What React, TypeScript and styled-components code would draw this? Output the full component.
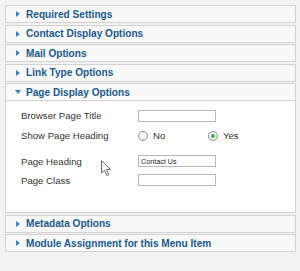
import React from "react";
import styled, { createGlobalStyle } from "styled-components";

const GlobalStyle = createGlobalStyle`
  html, body { margin: 0; padding: 0; }
  body {
    background: #f2f2f2;
    font-family: "Liberation Sans", Arial, sans-serif;
  }
  * { box-sizing: border-box; }
`;

const Page = styled.div`
  width: 300px;
  height: 271px;
  padding: 5px 4px 0 5px;
  position: relative;
  overflow: hidden;
`;

const Panel = styled.div`
  border: 1px solid #d2d2d2;
  background: #f8f8f8;
  margin-bottom: 1.5px;
`;

const Toggler = styled.div`
  height: 16px;
  display: flex;
  align-items: center;
  padding-left: 9px;
  gap: 5px;
  font-weight: bold;
  font-size: 10.1px;
  color: #1b5a8a;
  white-space: nowrap;
  overflow: hidden;
`;

const ArrowBox = styled.span`
  width: 6px;
  height: 6px;
  display: flex;
  align-items: center;
  justify-content: center;
  flex: none;
`;

const Content = styled.div`
  background: #ffffff;
  border-top: 1px solid #d2d2d2;
  height: 112px;
  padding: 0 0 0 15px;
  display: flex;
  flex-direction: column;
`;

const Row = styled.div<{ $top: number }>`
  display: grid;
  grid-template-columns: 117px 1fr;
  align-items: center;
  height: 14px;
  margin-top: ${(p) => p.$top}px;
`;

const Label = styled.span`
  font-size: 9.6px;
  color: #333;
  white-space: nowrap;
`;

const TextInput = styled.div`
  width: 78px;
  height: 12px;
  border: 1px solid #b8b8b8;
  background: #fff;
  font-size: 7.2px;
  color: #222;
  display: flex;
  align-items: center;
  padding-left: 2px;
  white-space: nowrap;
`;

const RadioGroup = styled.div`
  display: flex;
  align-items: center;
`;

const RadioOption = styled.div`
  width: 70px;
  display: flex;
  align-items: center;
  gap: 5px;
  font-size: 9.6px;
  color: #333;
`;

const RadioCircle = styled.span<{ $checked?: boolean }>`
  width: 10px;
  height: 10px;
  border-radius: 50%;
  border: 1px solid #8c8c8c;
  background: radial-gradient(circle at 40% 35%, #ffffff 0%, #e8e8e8 100%);
  display: flex;
  align-items: center;
  justify-content: center;
  flex: none;
  &::after {
    content: "";
    width: 4px;
    height: 4px;
    border-radius: 50%;
    background: ${(p) => (p.$checked ? "#3fae3f" : "transparent")};
  }
`;

const Cursor = styled.svg`
  position: absolute;
  left: 101px;
  top: 160px;
`;

const Arrow = ({ open }: { open?: boolean }) => (
  <ArrowBox>
    {open ? (
      <svg width="6" height="4" viewBox="0 0 6 4">
        <polygon points="0,0 6,0 3,4" fill="#3a85b8" />
      </svg>
    ) : (
      <svg width="4" height="6" viewBox="0 0 4 6">
        <polygon points="0,0 4,3 0,6" fill="#3a85b8" />
      </svg>
    )}
  </ArrowBox>
);

const Section = ({ title, open, children }: { title: string; open?: boolean; children?: React.ReactNode }) => (
  <Panel>
    <Toggler>
      <Arrow open={open} />
      {title}
    </Toggler>
    {open && children}
  </Panel>
);

export default function App() {
  return (
    <Page>
      <GlobalStyle />
      <Section title="Required Settings" />
      <Section title="Contact Display Options" />
      <Section title="Mail Options" />
      <Section title="Link Type Options" />
      <Section title="Page Display Options" open>
        <Content>
          <Row $top={7.5}>
            <Label>Browser Page Title</Label>
            <TextInput />
          </Row>
          <Row $top={6}>
            <Label>Show Page Heading</Label>
            <RadioGroup>
              <RadioOption>
                <RadioCircle />
                No
              </RadioOption>
              <RadioOption>
                <RadioCircle $checked />
                Yes
              </RadioOption>
            </RadioGroup>
          </Row>
          <Row $top={11.5}>
            <Label>Page Heading</Label>
            <TextInput>Contact Us</TextInput>
          </Row>
          <Row $top={5}>
            <Label>Page Class</Label>
            <TextInput />
          </Row>
        </Content>
      </Section>
      <Section title="Metadata Options" />
      <Section title="Module Assignment for this Menu Item" />
      <Cursor width="11" height="17" viewBox="0 0 11 17">
        <path
          d="M0.5 0.5 L0.5 13 L3.5 10.2 L5.8 15.5 L7.8 14.6 L5.6 9.5 L9.5 9.5 Z"
          fill="#ffffff"
          stroke="#666"
          strokeWidth="1"
          strokeLinejoin="round"
        />
      </Cursor>
    </Page>
  );
}
